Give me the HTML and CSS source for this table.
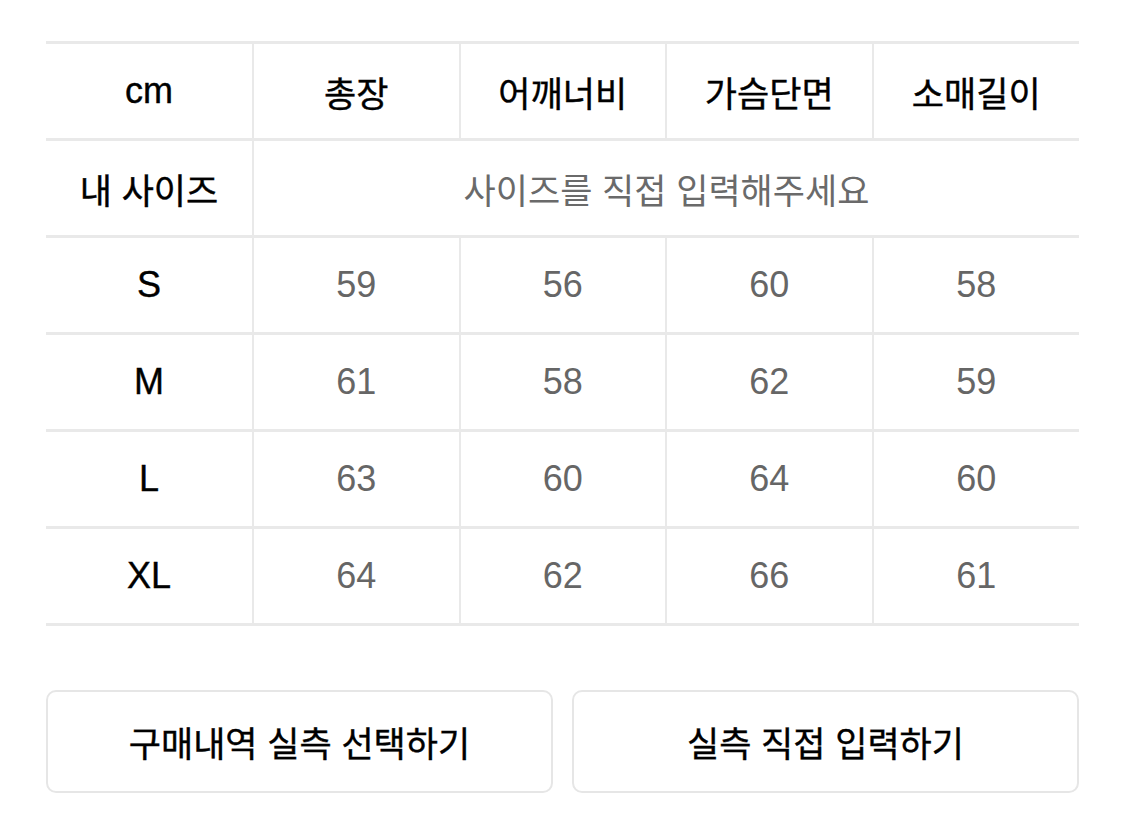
FILE: index.html
```html
<!DOCTYPE html>
<html lang="ko">
<head>
<meta charset="utf-8">
<link rel="stylesheet" href="styles.css">
</head>
<body>
<div class="page">
  <table class="size-table">
    <colgroup>
      <col class="col-first">
      <col class="col">
      <col class="col">
      <col class="col">
      <col class="col">
    </colgroup>
    <thead>
      <tr>
        <th class="latin">cm</th>
        <th>총장</th>
        <th>어깨너비</th>
        <th>가슴단면</th>
        <th>소매길이</th>
      </tr>
    </thead>
    <tbody>
      <tr>
        <th>내 사이즈</th>
        <td colspan="4" class="placeholder">사이즈를 직접 입력해주세요</td>
      </tr>
      <tr>
        <th class="latin">S</th>
        <td>59</td><td>56</td><td>60</td><td>58</td>
      </tr>
      <tr>
        <th class="latin">M</th>
        <td>61</td><td>58</td><td>62</td><td>59</td>
      </tr>
      <tr>
        <th class="latin">L</th>
        <td>63</td><td>60</td><td>64</td><td>60</td>
      </tr>
      <tr>
        <th class="latin">XL</th>
        <td>64</td><td>62</td><td>66</td><td>61</td>
      </tr>
    </tbody>
  </table>
  <div class="actions">
    <button class="btn" type="button">구매내역 실측 선택하기</button>
    <button class="btn" type="button">실측 직접 입력하기</button>
  </div>
</div>
</body>
</html>
```

FILE: styles.css
```css
html, body {
  margin: 0;
  padding: 0;
  background: #ffffff;
}

body {
  font-family: "Liberation Sans", "Noto Sans CJK KR", sans-serif;
  color: #000000;
}

.page {
  width: 1033px;
  padding: 41px 0 0 46px;
}

.size-table {
  width: 1033px;
  border-collapse: collapse;
  table-layout: fixed;
}

.col-first {
  width: 207px;
}

.size-table th,
.size-table td {
  height: 94px;
  padding: 0;
  text-align: center;
  vertical-align: middle;
  border-top: 3px solid #e9e9e9;
  border-bottom: 3px solid #e9e9e9;
  border-left: 2px solid #e9e9e9;
}

.size-table th:first-child {
  border-left: none;
}

.size-table th {
  font-size: 35px;
  font-weight: 400;
  color: #000000;
  -webkit-text-stroke: 0.4px #000000;
}

.size-table th.latin {
  font-size: 36px;
}

.size-table td {
  font-size: 36px;
  font-weight: 400;
  color: #666666;
}

.size-table td.placeholder {
  font-size: 35px;
  color: #6a6a6a;
}

.actions {
  display: flex;
  gap: 19px;
  margin-top: 64px;
}

.btn {
  flex: 1;
  height: 103px;
  background: #ffffff;
  border: 2px solid #e6e6e6;
  border-radius: 10px;
  font-family: "Liberation Sans", "Noto Sans CJK KR", sans-serif;
  font-size: 35px;
  font-weight: 400;
  color: #000000;
  -webkit-text-stroke: 0.4px #000000;
  padding: 0;
}
```
